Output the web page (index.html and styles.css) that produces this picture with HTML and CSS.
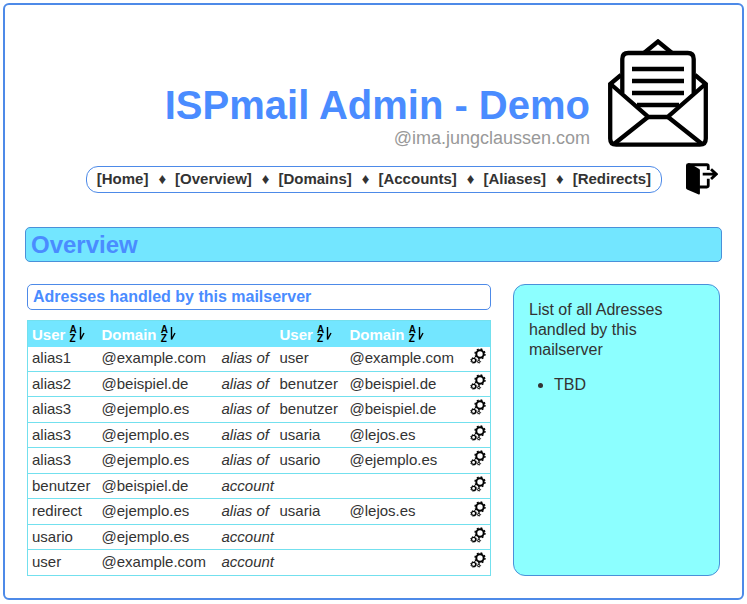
FILE: index.html
```
<!DOCTYPE html>
<html lang="en">
<head>
<meta charset="UTF-8">
<meta name="viewport" content="width=device-width, initial-scale=1">
<title>ISPmail Admin - Demo</title>
<link rel="stylesheet" href="styles.css">
</head>
<body>
<svg class="defs" width="0" height="0" aria-hidden="true">
  <symbol id="arrow" viewBox="0 0 6 17">
    <path d="M1.500 2v12.500L5 8" fill="none" stroke="#000" stroke-width="1.400"/>
  </symbol>
  <symbol id="gears" viewBox="0 0 16 16">
    <g fill="none" stroke="#000">
      <circle cx="10" cy="6" r="3.7" stroke-width="2"/>
      <circle cx="10" cy="6" r="5" stroke-width="1.4" stroke-dasharray="1.9 2.03"/>
      <circle cx="3.6" cy="12.4" r="2" stroke-width="1.2"/>
      <circle cx="3.6" cy="12.4" r="2.9" stroke-width="1" stroke-dasharray="1.1 1.18"/>
      <circle cx="8.8" cy="13.5" r="1.1" stroke-width="1"/>
      <circle cx="8.8" cy="13.5" r="1.8" stroke-width=".7" stroke-dasharray=".8 .82"/>
    </g>
  </symbol>
</svg>
<div id="page">
  <header>
    <div class="title">
      <h1>ISPmail Admin - Demo</h1>
      <p>@ima.jungclaussen.com</p>
    </div>
    <svg class="logo" viewBox="0 0 100 108" aria-hidden="true">
      <g fill="none" stroke="#000" stroke-width="4.300">
        <path d="M36 14L50 2.500l14 11.500"/>
        <path d="M14.300 54V20q0-6 6-6h59.400q6 0 6 6v34"/>
        <path d="M13 36L2.200 45v54.500q0 6.200 6 6.200h83.600q6 0 6-6.200V45L87 36"/>
        <path d="M2 44.500l38.500 33.500h19L98 44.500"/>
        <path d="M6 105l34-27M94 105L60 78"/>
        <path d="M24 30h52M24 42h52M24 54h52M29 66h42"/>
      </g>
    </svg>
  </header>
  <div class="bar">
    <nav>
      <a href="#">[Home]</a><span>♦</span>
      <a href="#">[Overview]</a><span>♦</span>
      <a href="#">[Domains]</a><span>♦</span>
      <a href="#">[Accounts]</a><span>♦</span>
      <a href="#">[Aliases]</a><span>♦</span>
      <a href="#">[Redirects]</a>
    </nav>
    <a class="logout" href="#" aria-label="Logout">
      <svg viewBox="0 0 92 90">
        <path d="M0 6q0-6 6-6h4l28 16q2 1 2 4v66q0 5-5 3L3 75q-3-1-3-4z"/>
        <path d="M6 4h54q4 0 4 4v11M64 44v20q0 4-4 4H38" fill="none" stroke="#000" stroke-width="8"/>
        <path d="M48 31h38M72 17l15 14-15 14" fill="none" stroke="#000" stroke-width="8"/>
      </svg>
    </a>
  </div>
  <h2>Overview</h2>
  <div class="content">
    <main>
      <h3>Adresses handled by this mailserver</h3>
      <table>
        <colgroup><col class="user"><col class="domain"><col class="type"><col class="user"><col class="domain"><col></colgroup>
        <thead>
          <tr>
            <th>User <a class="sort" href="#" aria-label="Sort by user"><span>A<br>Z</span><svg><use href="#arrow"/></svg></a></th>
            <th>Domain <a class="sort" href="#" aria-label="Sort by domain"><span>A<br>Z</span><svg><use href="#arrow"/></svg></a></th>
            <th></th>
            <th>User <a class="sort" href="#" aria-label="Sort by target user"><span>A<br>Z</span><svg><use href="#arrow"/></svg></a></th>
            <th>Domain <a class="sort" href="#" aria-label="Sort by target domain"><span>A<br>Z</span><svg><use href="#arrow"/></svg></a></th>
            <th></th>
          </tr>
        </thead>
        <tbody>
          <tr><td>alias1</td><td>@example.com</td><td><i>alias of</i></td><td>user</td><td>@example.com</td><td><a href="#" aria-label="Edit"><svg class="gears"><use href="#gears"/></svg></a></td></tr>
          <tr><td>alias2</td><td>@beispiel.de</td><td><i>alias of</i></td><td>benutzer</td><td>@beispiel.de</td><td><a href="#" aria-label="Edit"><svg class="gears"><use href="#gears"/></svg></a></td></tr>
          <tr><td>alias3</td><td>@ejemplo.es</td><td><i>alias of</i></td><td>benutzer</td><td>@beispiel.de</td><td><a href="#" aria-label="Edit"><svg class="gears"><use href="#gears"/></svg></a></td></tr>
          <tr><td>alias3</td><td>@ejemplo.es</td><td><i>alias of</i></td><td>usaria</td><td>@lejos.es</td><td><a href="#" aria-label="Edit"><svg class="gears"><use href="#gears"/></svg></a></td></tr>
          <tr><td>alias3</td><td>@ejemplo.es</td><td><i>alias of</i></td><td>usario</td><td>@ejemplo.es</td><td><a href="#" aria-label="Edit"><svg class="gears"><use href="#gears"/></svg></a></td></tr>
          <tr><td>benutzer</td><td>@beispiel.de</td><td><i>account</i></td><td></td><td></td><td><a href="#" aria-label="Edit"><svg class="gears"><use href="#gears"/></svg></a></td></tr>
          <tr><td>redirect</td><td>@ejemplo.es</td><td><i>alias of</i></td><td>usaria</td><td>@lejos.es</td><td><a href="#" aria-label="Edit"><svg class="gears"><use href="#gears"/></svg></a></td></tr>
          <tr><td>usario</td><td>@ejemplo.es</td><td><i>account</i></td><td></td><td></td><td><a href="#" aria-label="Edit"><svg class="gears"><use href="#gears"/></svg></a></td></tr>
          <tr><td>user</td><td>@example.com</td><td><i>account</i></td><td></td><td></td><td><a href="#" aria-label="Edit"><svg class="gears"><use href="#gears"/></svg></a></td></tr>
        </tbody>
      </table>
    </main>
    <aside>
      <p>List of all Adresses handled by this mailserver</p>
      <ul>
        <li>TBD</li>
      </ul>
    </aside>
  </div>
</div>
</body>
</html>
```
FILE: styles.css
```
* { margin: 0; padding: 0; box-sizing: border-box; }
body {
  padding: 3px;
  background: #fff;
  color: #333;
  font-family: "Liberation Sans", Arial, sans-serif;
  font-size: 15px;
}
a { color: inherit; text-decoration: none; }
svg { display: block; }
.defs { position: absolute; }

#page {
  padding: 34px 20px 22px;
  border: 2px solid #4d8ae8;
  border-radius: 6px;
}

header {
  display: flex;
  justify-content: flex-end;
  align-items: flex-end;
  gap: 18px;
  padding-right: 14px;
}
.title { text-align: right; }
h1 {
  color: #4a8cff;
  font-size: 40px;
  line-height: 48px;
}
.title p {
  color: #999;
  font-size: 18px;
  line-height: 18px;
}
.logo {
  width: 100px;
  height: 108px;
}

.bar {
  display: flex;
  justify-content: flex-end;
  align-items: center;
  gap: 24px;
  margin-top: 16px;
  padding-right: 4px;
}
nav {
  display: flex;
  height: 27px;
  padding: 0 10px;
  border: 1px solid #4d8ae8;
  border-radius: 12px;
  font-weight: bold;
  line-height: 24px;
}
nav span { padding: 0 9px 0 10px; }
.logout svg {
  width: 32px;
  height: 32px;
}

h2 {
  margin-top: 32px;
  padding-left: 5px;
  border: 1px solid #4a90d9;
  border-radius: 5px;
  background: #73e6ff;
  color: #4a8cff;
  font-size: 24px;
  line-height: 33px;
}

.content {
  display: flex;
  gap: 22px;
  margin-top: 22px;
  padding: 0 2px;
}
main { flex: 1; }
h3 {
  padding-left: 5px;
  border: 1px solid #4d8ae8;
  border-radius: 5px;
  color: #4a8cff;
  font-size: 16px;
  line-height: 24px;
}

table {
  width: 100%;
  height: 256px;
  margin-top: 10px;
  border: 1px solid #73e0ee;
  border-collapse: collapse;
  table-layout: fixed;
}
col.user { width: 70px; }
col.domain { width: 120px; }
col.type { width: 58px; }
th, td {
  padding: 0 0 2px 4px;
  text-align: left;
  white-space: nowrap;
}
th {
  height: 26px;
  padding-bottom: 0;
  background: #73e6ff;
  color: #fff;
}
td { border-bottom: 1px solid #73e0ee; }
.sort {
  display: inline-flex;
  gap: 2px;
  vertical-align: 7px;
  color: #000;
  font-size: 10px;
  line-height: 9px;
}
.sort svg {
  width: 6px;
  height: 17px;
}
.gears {
  width: 16px;
  height: 16px;
  margin-bottom: 3px;
}

aside {
  width: 207px;
  padding: 15px;
  border: 1px solid #4a90d9;
  border-radius: 12px;
  background: #8cffff;
  font-size: 16px;
  line-height: 20px;
}
aside ul {
  margin-top: 15px;
  padding-left: 25px;
}
```
